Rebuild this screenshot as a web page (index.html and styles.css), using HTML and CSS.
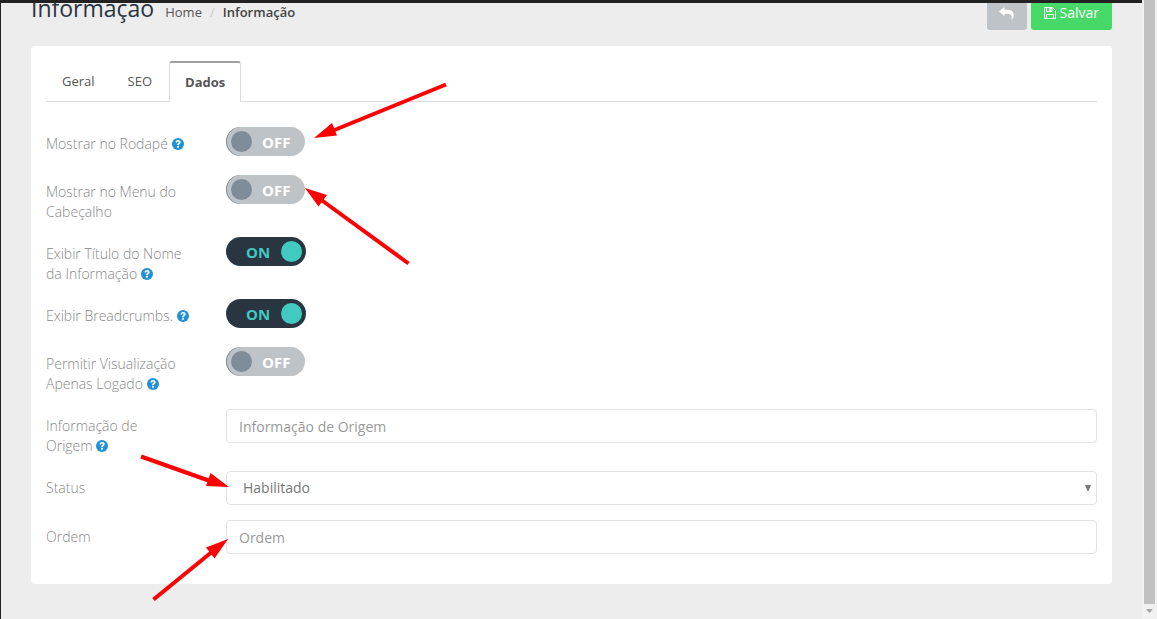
FILE: index.html
```html
<!DOCTYPE html>
<html lang="pt-BR">
<head>
<meta charset="utf-8">
<meta name="viewport" content="width=device-width, initial-scale=1">
<title>Informação</title>
<link rel="stylesheet" href="styles.css">
</head>
<body>
<svg class="sprite" aria-hidden="true">
  <symbol id="help" viewBox="0 0 12 12"><circle cx="6" cy="6" r="6" fill="#1f91d4"/><path d="M3.400 4.300C3.700 2.700 4.800 2 6.100 2C7.600 2 8.700 2.900 8.700 4.200C8.700 5.800 6.900 5.800 6.900 7.200H5.100C5.100 5.200 6.800 5.300 6.800 4.300C6.800 3.800 6.500 3.600 6 3.600C5.400 3.600 5.200 4 5 4.700ZM5.100 8H6.900V9.800H5.100Z" fill="#fff"/></symbol>
</svg>
<div class="page">
  <main class="main">
    <header class="header">
      <h1 class="title">Informação</h1>
      <nav class="crumbs" aria-label="Breadcrumb">
        <a href="#">Home</a><span class="slash">/</span><strong>Informação</strong>
      </nav>
      <div class="actions">
        <button class="btn btn-back" type="button" aria-label="Voltar">
          <svg width="15" height="13" viewBox="0 0 15 13"><path d="M0 4.500L5.500 0V2.700H8C12.500 2.700 15 5 14.700 8.500C14.600 10.300 13.900 11.600 13 12.500C12.700 12.700 12.300 12.500 12.500 12.100C13.300 8.200 11.500 6.700 8 6.700H5.500V9.200Z" fill="#fff"/></svg>
        </button>
        <button class="btn btn-save" type="button">
          <svg width="12" height="12" viewBox="0 0 12 12" fill="none" stroke="#fff"><path d="M.5.5H8.500L11.500 3.500V11.500H.5ZM2.500.5V4.500H8V.5M2.500 11.500V7.500H9.500V11.500"/><path d="M6.200 1V4" stroke-width="1.600"/></svg>
          Salvar
        </button>
      </div>
    </header>

    <section class="card">
      <nav class="tabs">
        <a class="tab" href="#">Geral</a>
        <a class="tab" href="#">SEO</a>
        <a class="tab active" href="#" aria-current="page">Dados</a>
      </nav>
      <form class="form">
        <div class="row">
          <label class="label" for="footer">Mostrar no <span class="last">Rodapé <svg class="help"><use href="#help"/></svg></span></label>
          <div class="switch"><input id="footer" type="checkbox"><span class="state">OFF</span></div>
        </div>
        <div class="row">
          <label class="label" for="menu">Mostrar no Menu do Cabeçalho</label>
          <div class="switch"><input id="menu" type="checkbox"><span class="state">OFF</span></div>
        </div>
        <div class="row">
          <label class="label" for="show-title">Exibir Título do Nome da <span class="last">Informação <svg class="help"><use href="#help"/></svg></span></label>
          <div class="switch"><input id="show-title" type="checkbox" checked><span class="state">ON</span></div>
        </div>
        <div class="row">
          <label class="label" for="show-crumbs">Exibir <span class="last">Breadcrumbs. <svg class="help"><use href="#help"/></svg></span></label>
          <div class="switch"><input id="show-crumbs" type="checkbox" checked><span class="state">ON</span></div>
        </div>
        <div class="row">
          <label class="label" for="logged">Permitir Visualização Apenas <span class="last">Logado <svg class="help"><use href="#help"/></svg></span></label>
          <div class="switch"><input id="logged" type="checkbox"><span class="state">OFF</span></div>
        </div>
        <div class="row">
          <label class="label" for="origin">Informação de <span class="last">Origem <svg class="help"><use href="#help"/></svg></span></label>
          <input class="field" id="origin" type="text" placeholder="Informação de Origem">
        </div>
        <div class="row">
          <label class="label" for="status">Status</label>
          <div class="select">
            <select class="field" id="status"><option>Habilitado</option><option>Desabilitado</option></select>
            <svg class="caret" width="6" height="6" viewBox="0 0 6 6"><path d="M0 0H6L3.500 6H2.500Z" fill="#777"/></svg>
          </div>
        </div>
        <div class="row">
          <label class="label" for="order">Ordem</label>
          <input class="field" id="order" type="text" placeholder="Ordem">
        </div>
      </form>
    </section>
  </main>
  <div class="scroll" aria-hidden="true">
    <div class="thumb"></div>
    <svg class="scroll-down" width="7" height="4" viewBox="0 0 7 4"><path d="M0 0H7L3.500 4Z" fill="#a3a3a3"/></svg>
  </div>
  <div class="topbar"></div>
  <svg class="arrows" width="460" height="619" viewBox="0 0 460 619" aria-hidden="true">
    <g stroke="#f00" stroke-width="4">
      <path d="M446 84.500L332 131M408.500 263.500L320 199M141 456.500L210 481M153.500 599.500L213 551"/>
    </g>
    <g fill="#f00">
      <path d="M314 138L332 123L337 135.500ZM305 188L327 195L318.500 206.500ZM229 487L206 486L210.500 473ZM228 539L214.500 558.500L206 547.500Z"/>
    </g>
  </svg>
</div>
</body>
</html>
```
FILE: styles.css
```css
* { box-sizing: border-box; }
body {
  margin: 0;
  background: #ededed;
  color: #555;
  font: 13px/20px "Open Sans", "Noto Sans", sans-serif;
}
a { color: inherit; text-decoration: none; }
.sprite { position: absolute; width: 0; height: 0; }
.page {
  position: relative;
  display: flex;
  min-height: 100vh;
  border-left: 1px solid #222;
}
.topbar {
  position: absolute;
  top: 0;
  left: 0;
  right: 15px;
  height: 3px;
  background: #222;
}
.main { flex: 1; min-width: 0; padding: 0 30px 34px; }

.header { display: flex; height: 46px; align-items: flex-start; }
.title {
  margin: -8px 11px 0 0;
  color: #2a3542;
  font-size: 23px;
  font-weight: 400;
  line-height: 33px;
}
.crumbs { margin-top: 2px; }
.crumbs strong { font-weight: 600; color: #444; }
.slash { margin: 0 8px; color: #ccc; }
.actions { display: flex; gap: 4px; margin: -4px 0 0 auto; }
.btn {
  display: flex;
  align-items: center;
  justify-content: center;
  gap: 4px;
  height: 34px;
  padding: 0 13px;
  border: 0;
  border-radius: 3px;
  color: #fff;
  font: 14px/20px "Open Sans", "Noto Sans", sans-serif;
}
.btn-back { min-width: 40px; padding: 0 12px; background: #bdc3c7; }
.btn-save { background: #46d968; }

.card { padding: 15px 15px 30px; border-radius: 4px; background: #fff; }
.tabs { display: flex; align-items: flex-end; gap: 1px; border-bottom: 1px solid #ddd; }
.tab { padding: 10px 16px; border-radius: 3px 3px 0 0; }
.tab.active {
  margin-bottom: -1px;
  padding: 9px 15px 10px;
  border: 1px solid #ddd;
  border-top: 2px solid #a0a0a0;
  border-bottom: 0;
  background: #fff;
  font-weight: 700;
}

.form { display: grid; gap: 15px; padding-top: 25px; }
.row { display: grid; grid-template-columns: 150px 1fr; column-gap: 30px; align-items: start; min-height: 33px; }
.label { padding-top: 7px; color: #888; font-size: 14px; font-weight: 300; }
.last { white-space: nowrap; }
.help { width: 12px; height: 12px; vertical-align: -1px; }

.switch { position: relative; width: 80px; height: 29px; }
.switch input {
  appearance: none;
  display: flex;
  align-items: center;
  width: 79px;
  height: 29px;
  margin: 0;
  padding: 0 5px;
  border-radius: 15px;
  background: #bdc3c7;
  box-shadow: inset 1px 0 0 #7f8c9a;
}
.switch input::before {
  content: "";
  width: 21px;
  height: 21px;
  border-radius: 50%;
  background: #7f8c9a;
}
.switch input:checked {
  justify-content: flex-end;
  width: 80px;
  padding: 0 4px;
  background: #2a3542;
  box-shadow: none;
}
.switch input:checked::before { background: #41cac0; }
.state {
  position: absolute;
  top: 5px;
  left: 36px;
  color: #fff;
  font-size: 15px;
  font-weight: 700;
  pointer-events: none;
}
.switch input:checked + .state { left: 20px; color: #41cac0; }

.field {
  width: 100%;
  height: 34px;
  padding: 0 12px;
  border: 1px solid #e2e2e4;
  border-radius: 4px;
  background: #fff;
  color: #777;
  font: 14px/20px "Open Sans", "Noto Sans", sans-serif;
}
.field::placeholder { color: #999; opacity: 1; }
.select { position: relative; }
.select .field { display: block; appearance: none; padding: 0 16px; }
.caret { position: absolute; top: 14px; right: 6px; pointer-events: none; }

.scroll {
  display: flex;
  flex-direction: column;
  align-items: center;
  gap: 5px;
  width: 15px;
  padding-bottom: 6px;
  background: #f1f1f1;
}
.thumb { flex: 1; width: 11px; background: #c1c1c1; }
.arrows { position: absolute; top: 0; left: -1px; pointer-events: none; }
```
